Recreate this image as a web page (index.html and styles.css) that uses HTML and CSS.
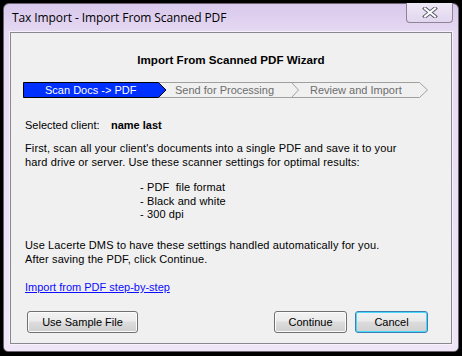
FILE: index.html
```html
<!DOCTYPE html>
<html>
<head>
<meta charset="utf-8">
<link rel="stylesheet" href="styles.css">
</head>
<body>
<div class="window">
  <div class="titlebar">
    <span class="title">Tax Import - Import From Scanned PDF</span>
    <div class="close">
      <svg width="16" height="11" viewBox="0 0 16 11">
        <path d="M3 1.5 L13 9.5 M13 1.5 L3 9.5" stroke="#5a5a6a" stroke-width="4" stroke-linecap="square"/>
        <path d="M3 1.5 L13 9.5 M13 1.5 L3 9.5" stroke="#ffffff" stroke-width="2" stroke-linecap="square"/>
      </svg>
    </div>
  </div>
  <div class="client">
    <h1 class="heading">Import From Scanned PDF Wizard</h1>
    <svg class="steps" width="410" height="18" viewBox="0 0 410 18">
      <path d="M136 1.5 H397.5 M136 16.5 H397.5 M269.5 1.5 L276.5 9 L269.5 16.5 M397.5 1.5 L405.5 9 L397.5 16.5" fill="none" stroke="#a0a0a0" stroke-width="1"/>
      <polygon points="1.5,1.5 136.5,1.5 144,9 136.5,16.5 1.5,16.5" fill="#0030ff" stroke="#000" stroke-width="1"/>
      <text x="23" y="13" class="step-on">Scan Docs -&gt; PDF</text>
      <text x="153" y="13" class="step-off">Send for Processing</text>
      <text x="288" y="13" class="step-off">Review and Import</text>
    </svg>
    <div class="client-row"><span class="label">Selected client:</span><b class="name">name last</b></div>
    <p class="para">First, scan all your client's documents into a single PDF and save it to your<br>hard drive or server. Use these scanner settings for optimal results:</p>
    <ul class="settings">
      <li>- PDF&nbsp; file format</li>
      <li>- Black and white</li>
      <li>- 300 dpi</li>
    </ul>
    <p class="para2">Use Lacerte DMS to have these settings handled automatically for you.<br>After saving the PDF, click Continue.</p>
    <a class="link" href="#">Import from PDF step-by-step</a>
    <div class="buttons">
      <button class="btn btn-sample">Use Sample File</button>
      <span class="spacer"></span>
      <button class="btn btn-continue">Continue</button>
      <button class="btn btn-cancel">Cancel</button>
    </div>
  </div>
</div>
</body>
</html>
```
FILE: styles.css
```css
html, body {
  margin: 0;
  padding: 0;
  background: #000;
}
body {
  width: 462px;
  height: 356px;
  padding: 3px 3px 4px 3px;
  box-sizing: border-box;
  font-family: "Liberation Sans", Arial, sans-serif;
  font-size: 11px;
  color: #000;
}
.window {
  height: 349px;
  box-sizing: border-box;
  border: 1px solid #6b6470;
  border-radius: 6px 6px 5px 5px;
  background: linear-gradient(#d9c8ec 0px, #e6daf3 30px, #efe6f8 100%);
  padding: 0 6px 7px 6px;
  display: flex;
  flex-direction: column;
}
.titlebar {
  height: 28px;
  display: flex;
  align-items: flex-start;
  position: relative;
}
.title {
  font-family: "Open Sans", "Liberation Sans", sans-serif;
  font-size: 12px;
  margin-top: 5px;
  margin-left: 2px;
  color: #000;
  letter-spacing: -0.1px;
}
.close {
  position: absolute;
  right: -1px;
  top: -1px;
  width: 45px;
  height: 19px;
  border: 1px solid #8d8499;
  border-top: none;
  border-radius: 0 0 4px 4px;
  background: linear-gradient(#efe8f6, #e2d7ee);
  display: flex;
  align-items: center;
  justify-content: center;
}
.client {
  flex: 1;
  border: 1px solid #8a8690;
  background: #f0f0f0;
  padding: 20px 14px 10px 14px;
  display: flex;
  flex-direction: column;
  box-shadow: 0 0 0 1px #f6f1fb;
}
.heading {
  margin: 0;
  font-size: 11.6px;
  font-weight: bold;
  line-height: 14px;
  text-align: center;
}
.steps {
  display: block;
  margin: 14px 0 0 -3px;
}
.step-on {
  fill: #fff;
  font-family: "Liberation Sans", Arial, sans-serif;
  font-size: 11px;
}
.step-off {
  fill: #6d6d6d;
  font-family: "Liberation Sans", Arial, sans-serif;
  font-size: 11px;
}
.client-row {
  margin-top: 19px;
  line-height: 14px;
  display: flex;
}
.label {
  width: 86px;
}
.name {
  font-weight: bold;
}
.para {
  margin: 9px 0 0 0;
  line-height: 14px;
  letter-spacing: 0.12px;
}
.settings {
  list-style: none;
  margin: 12px 0 0 115px;
  padding: 0;
  line-height: 13.5px;
  letter-spacing: 0.12px;
}
.para2 {
  margin: 17.5px 0 0 0;
  line-height: 13.5px;
  letter-spacing: 0.12px;
}
.link {
  margin-top: 14px;
  line-height: 14px;
  color: #0d0dff;
  text-decoration: underline;
  align-self: flex-start;
}
.buttons {
  margin: 17px 9px 0 2px;
  display: flex;
  gap: 8px;
}
.spacer {
  flex: 1;
}
.btn {
  height: 22px;
  box-sizing: border-box;
  border: 1px solid #707070;
  border-radius: 3px;
  background: linear-gradient(#f3f3f3 0%, #ebebeb 45%, #dddddd 50%, #cfcfcf 100%);
  font-family: "Liberation Sans", Arial, sans-serif;
  font-size: 11px;
  color: #000;
  padding: 0;
  box-shadow: inset 0 0 0 1px #fcfcfc;
}
.btn-sample {
  width: 111px;
}
.btn-continue {
  width: 73px;
}
.btn-cancel {
  width: 73px;
  border-color: #3c7fb1;
  box-shadow: inset 0 0 0 1px #48d8fb;
  background: linear-gradient(#f2f2f2 0%, #eaeaea 45%, #dcdcdc 50%, #d0d0d0 100%);
}
```
